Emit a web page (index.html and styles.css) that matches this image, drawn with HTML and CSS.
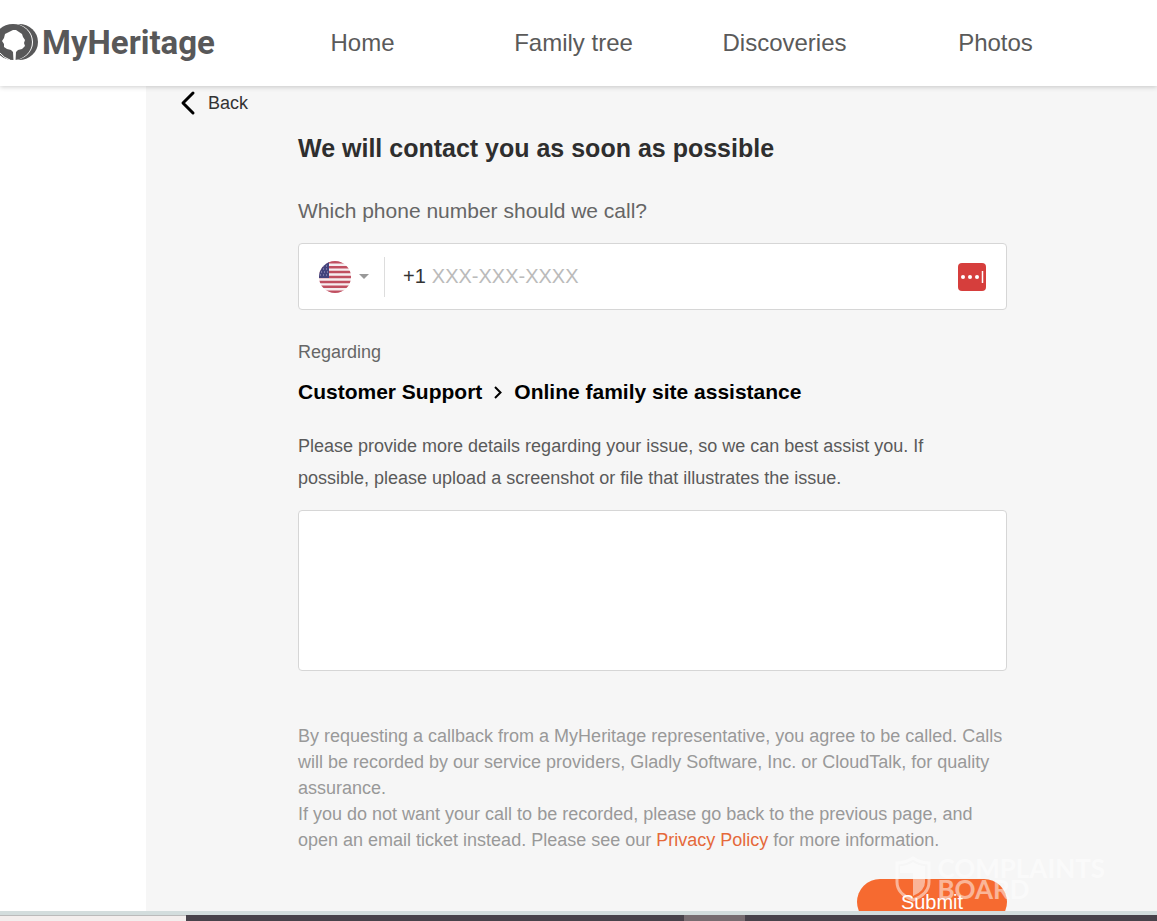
FILE: index.html
```html
<!DOCTYPE html>
<html lang="en">
<head>
    <meta charset="UTF-8">
    <meta name="viewport" content="width=device-width, initial-scale=1.0">
    <title>MyHeritage - Request a callback</title>
    <link rel="stylesheet" href="styles.css">
</head>
<body>
    <header class="header">
        <a href="#" class="logo">
            <svg class="logo-mark" width="38" height="38" viewBox="0 0 38 38" aria-hidden="true">
                <ellipse cx="19" cy="18" rx="19" ry="18" fill="#585859"/>
                <ellipse cx="13" cy="18" rx="20" ry="18.500" fill="#fff"/>
                <ellipse cx="13" cy="18" rx="19" ry="18" fill="#585859"/>
                <path d="M0 29Q4 34 10 36" fill="none" stroke="#fff" stroke-width="1"/>
                <path d="M13 6L16 6L19 8L22 10L23 13L25 16L24 19L25 22L22 25L18 26L16 28L15.500 37H13.500L13 28L11 26L7 25L4 23L4 20L2 17L4 14L5 10L9 8Z" fill="#fff"/>
            </svg>
            <span>MyHeritage</span>
        </a>
        <nav class="nav">
            <a href="#">Home</a>
            <a href="#">Family tree</a>
            <a href="#">Discoveries</a>
            <a href="#">Photos</a>
        </nav>
    </header>

    <main class="main">
        <div class="panel">
            <a href="#" class="back">
                <svg width="16" height="26" viewBox="0 0 16 26" aria-hidden="true">
                    <path d="M13 3L3 13L13 23" fill="none" stroke="#000" stroke-width="3" stroke-linecap="round" stroke-linejoin="round"/>
                </svg>
                Back
            </a>

            <!-- Callback form -->
            <form class="callback-form">
                <h1>We will contact you as soon as possible</h1>
                <label class="question" for="phone">Which phone number should we call?</label>
                <div class="phone-box">
                    <div class="country">
                        <svg width="32" height="32" viewBox="0 0 32 32" aria-hidden="true">
                            <defs>
                                <clipPath id="flag-circle"><circle cx="16" cy="16" r="16"/></clipPath>
                            </defs>
                            <g clip-path="url(#flag-circle)">
                                <rect width="32" height="32" fill="#f6eef0"/>
                                <path d="M0 1.200H32M0 6.200H32M0 11.100H32M0 16H32M0 20.900H32M0 25.800H32M0 30.800H32" stroke="#c04f60" stroke-width="2.500"/>
                                <rect width="10" height="17" fill="#43437c"/>
                                <path d="M1 8H10M2 11H10M1 14H10M4 5H10" stroke="#a9a6c8" stroke-width="1" stroke-dasharray="1 2"/>
                            </g>
                        </svg>
                        <svg width="10" height="5" viewBox="0 0 10 5" aria-hidden="true">
                            <path d="M0 0H10L5 5Z" fill="#999"/>
                        </svg>
                        <select aria-label="Country code">
                            <option>United States</option>
                        </select>
                    </div>
                    <span class="prefix">+1</span>
                    <input type="tel" id="phone" name="phone" placeholder="XXX-XXX-XXXX">
                    <button type="button" class="fill-button" aria-label="Fill in number">
                        <svg width="28" height="28" viewBox="0 0 28 28" aria-hidden="true">
                            <rect width="28" height="28" rx="4" fill="#d63e3c"/>
                            <circle cx="5" cy="14" r="2" fill="#fff"/>
                            <circle cx="12" cy="14" r="2" fill="#fff"/>
                            <circle cx="19" cy="14" r="2" fill="#fff"/>
                            <path d="M24.500 8V20" stroke="#fff" stroke-width="1.500"/>
                        </svg>
                    </button>
                </div>

                <p class="regarding">Regarding</p>
                <h2>
                    Customer Support
                    <svg width="8" height="14" viewBox="0 0 8 14" aria-hidden="true">
                        <path d="M1 2L6.500 7.500L1 13" fill="none" stroke="#000" stroke-width="2"/>
                    </svg>
                    Online family site assistance
                </h2>
                <label class="details-label" for="details">Please provide more details regarding your issue, so we can best assist you. If<br>
                    possible, please upload a screenshot or file that illustrates the issue.</label>
                <textarea id="details" name="details"></textarea>

                <p class="terms">
                    By requesting a callback from a MyHeritage representative, you agree to be called. Calls<br>
                    will be recorded by our service providers, Gladly Software, Inc. or CloudTalk, for quality<br>
                    assurance.<br>
                    If you do not want your call to be recorded, please go back to the previous page, and<br>
                    open an email ticket instead. Please see our <a href="#">Privacy Policy</a> for more information.
                </p>
                <button type="submit" class="submit">Submit</button>
            </form>
        </div>

        <div class="watermark">
            <svg width="36" height="46" viewBox="0 0 36 46" aria-hidden="true">
                <path d="M2 7Q10 7 18 2Q26 7 34 7V26Q34 38 18 44Q2 38 2 26Z" fill="none" stroke="#fff" stroke-width="3"/>
                <path d="M5 10Q12 10 18 6Q24 10 30 10V17H5Z" fill="#fff"/>
                <path d="M18 17H30V26Q30 35 18 40Z" fill="#fff"/>
            </svg>
            <div>COMPLAINTS<br>BOARD</div>
        </div>
    </main>

    <footer class="taskbar">
        <div class="taskbar-search"></div>
        <div class="taskbar-active"></div>
    </footer>
</body>
</html>
```
FILE: styles.css
```css
* {
    box-sizing: border-box;
}
body {
    font-family: "Liberation Sans", Arial, sans-serif;
    background-color: white;
    margin: 0;
    height: 100vh;
    display: flex;
    flex-direction: column;
}
a {
    text-decoration: none;
}
.header {
    display: flex;
    align-items: center;
    height: 86px;
    flex-shrink: 0;
    background-color: white;
    box-shadow: 0 1px 5px rgba(0, 0, 0, 0.2);
    z-index: 1;
}
.logo {
    display: flex;
    align-items: center;
    gap: 4px;
    width: 257px;
    flex-shrink: 0;
    font-family: Roboto, sans-serif;
    font-size: 33px;
    font-weight: 700;
    line-height: 40px;
    color: #585859;
}
.nav {
    flex: 1;
    display: grid;
    grid-template-columns: repeat(4, 1fr);
    margin-right: 56px;
    text-align: center;
}
.nav a {
    font-size: 24px;
    color: #5a5a5a;
}
.main {
    position: relative;
    flex: 1;
    min-height: 0;
    overflow: hidden;
}
.panel {
    margin-left: 146px;
    padding: 4px 150px 0 34px;
    min-height: 100%;
    background-color: #f6f6f6;
}
.back {
    display: flex;
    align-items: center;
    gap: 12px;
    font-size: 18px;
    color: #333;
}
.callback-form {
    margin-left: 118px;
}
h1 {
    margin: 12px 0 0;
    font-size: 25px;
    line-height: 40px;
    color: #2e2e2e;
}
.question {
    display: block;
    margin: 31px 0 20px;
    font-size: 21px;
    line-height: 24px;
    color: #666;
}
.phone-box {
    display: flex;
    align-items: center;
    height: 67px;
    padding: 0 20px;
    background-color: white;
    border: 1px solid #d6d6d6;
    border-radius: 4px;
}
.country {
    position: relative;
    display: flex;
    align-items: center;
    gap: 8px;
    height: 40px;
    padding-right: 15px;
    border-right: 1px solid #ddd;
}
.country select {
    position: absolute;
    inset: 0;
    width: 100%;
    opacity: 0;
    cursor: pointer;
}
.prefix {
    margin: 0 6px 0 18px;
    font-size: 20px;
    color: #333;
}
.phone-box input {
    flex: 1;
    min-width: 0;
    padding: 0;
    border: none;
    outline: none;
    font-family: inherit;
    font-size: 20px;
}
.phone-box input::placeholder {
    color: #bbb;
}
.fill-button {
    display: flex;
    padding: 0;
    border: none;
    background: none;
    cursor: pointer;
}
.regarding {
    margin: 32px 0 0;
    font-size: 18px;
    line-height: 20px;
    color: #666;
}
h2 {
    display: flex;
    align-items: center;
    gap: 12px;
    margin: 16px 0 24px;
    font-size: 21px;
    line-height: 28px;
    color: #000;
}
.details-label {
    display: block;
    font-size: 18px;
    line-height: 32px;
    color: #5a5a5a;
}
textarea {
    display: block;
    width: 100%;
    height: 161px;
    margin: 16px 0 52px;
    border: 1px solid #d6d6d6;
    border-radius: 4px;
    background-color: white;
    resize: none;
}
.terms {
    margin: 0;
    font-size: 18px;
    line-height: 26px;
    color: #999;
}
.terms a {
    color: #e5693a;
}
.submit {
    display: block;
    width: 150px;
    height: 46px;
    margin: 26px 0 0 auto;
    border: none;
    border-radius: 24px;
    background-color: #f66a30;
    font-family: inherit;
    font-size: 20px;
    color: white;
    cursor: pointer;
}
.watermark {
    position: absolute;
    right: 52px;
    bottom: 9px;
    display: flex;
    align-items: center;
    gap: 6px;
    font-family: Lato, sans-serif;
    font-size: 26px;
    font-weight: 700;
    line-height: 21px;
    color: white;
    opacity: 0.5;
    pointer-events: none;
}
.taskbar {
    display: flex;
    height: 10px;
    flex-shrink: 0;
    border-top: 4px solid #d3dddd;
    background-color: #48424a;
}
.taskbar-search {
    width: 186px;
    background-color: #f3eeed;
    border-top: 1px solid #bbb;
}
.taskbar-active {
    width: 61px;
    margin-left: 498px;
    background-color: #776c70;
}
```
